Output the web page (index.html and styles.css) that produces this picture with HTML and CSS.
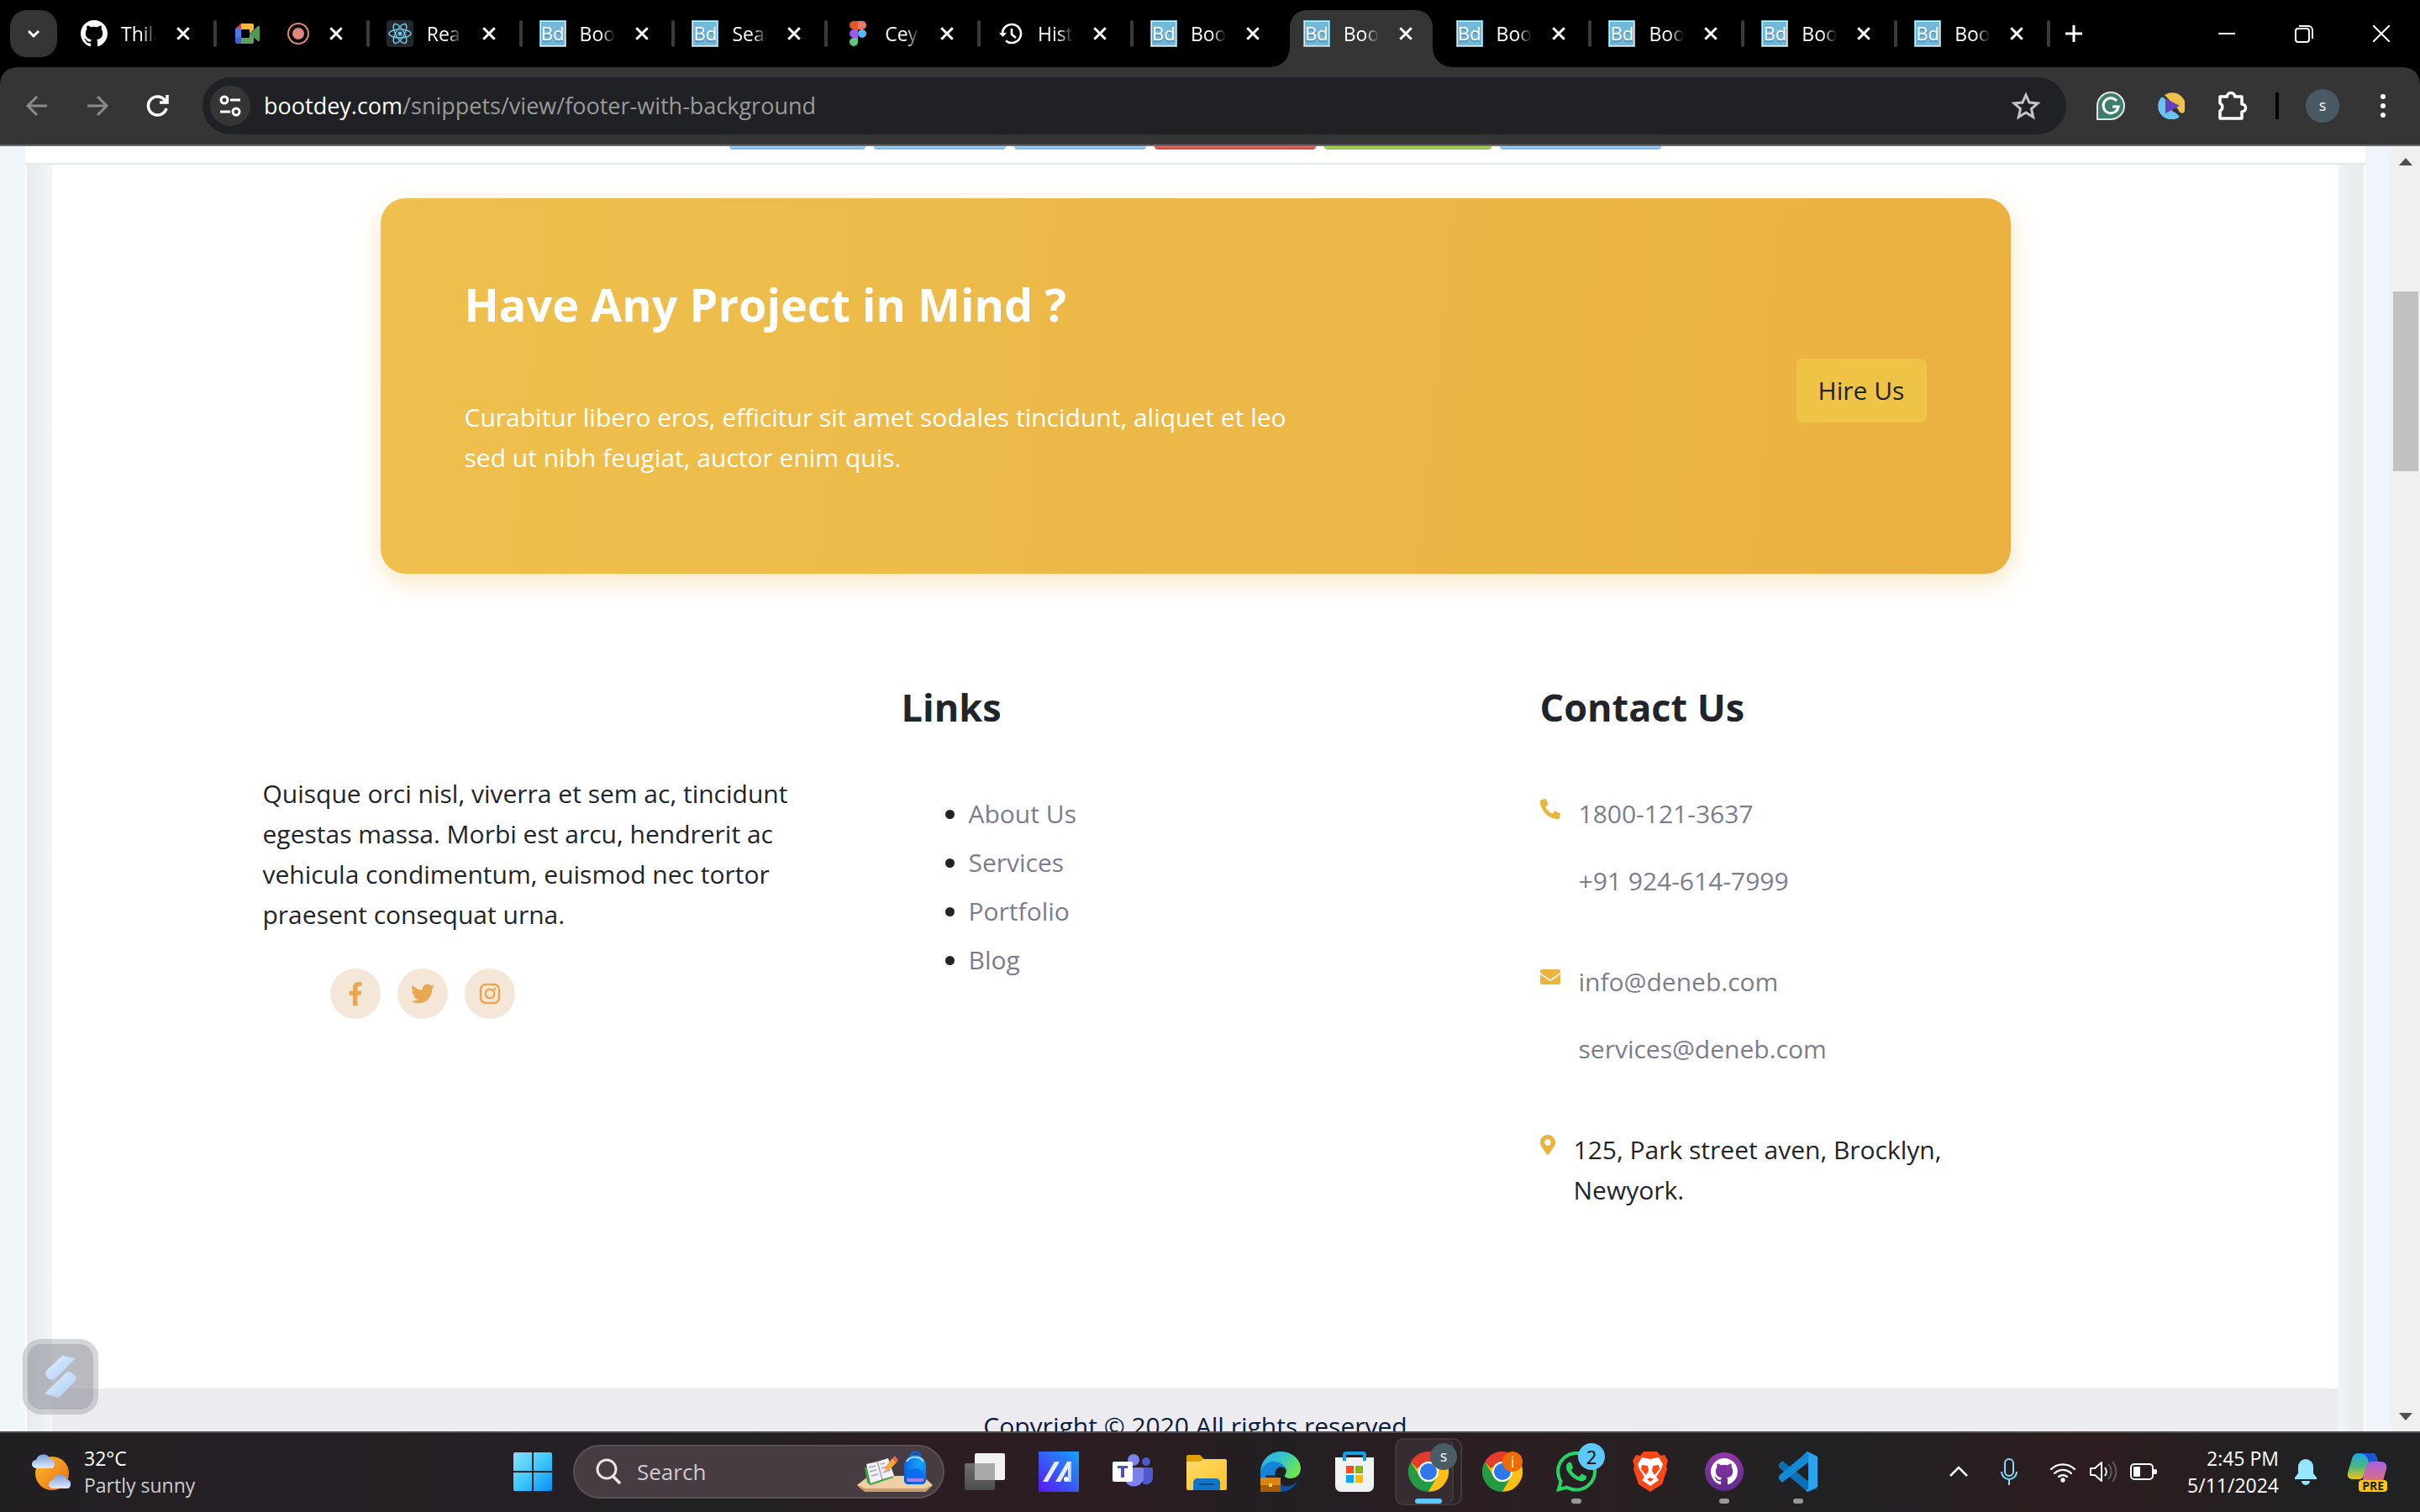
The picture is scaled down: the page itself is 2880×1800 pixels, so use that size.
FILE: index.html
```html
<!DOCTYPE html>
<html lang="en">
<head>
<meta charset="utf-8">
<title>Footer with background</title>
<link rel="stylesheet" href="styles.css">
</head>
<body>
<svg class="defs" aria-hidden="true">
  <symbol id="x" viewBox="0 0 16 16"><path d="M2 2l12 12M14 2L2 14" stroke="#fff" stroke-width="2.6" fill="none"/></symbol>
  <symbol id="cat" viewBox="0 0 16 16"><path d="M8 0C3.58 0 0 3.58 0 8c0 3.54 2.29 6.53 5.47 7.59.4.07.55-.17.55-.38 0-.19-.01-.82-.01-1.49-2.01.37-2.53-.49-2.69-.94-.09-.23-.48-.94-.82-1.13-.28-.15-.68-.52-.01-.53.63-.01 1.08.58 1.23.82.72 1.21 1.87.87 2.33.66.07-.52.28-.87.51-1.07-1.78-.2-3.64-.89-3.64-3.95 0-.87.31-1.59.82-2.15-.08-.2-.36-1.02.08-2.12 0 0 .67-.21 2.2.82.64-.18 1.32-.27 2-.27s1.36.09 2 .27c1.53-1.04 2.2-.82 2.2-.82.44 1.1.16 1.92.08 2.12.51.56.82 1.27.82 2.15 0 3.07-1.87 3.75-3.65 3.95.29.25.54.73.54 1.48 0 1.07-.01 1.93-.01 2.2 0 .21.15.46.55.38A8.01 8.01 0 0 0 16 8c0-4.42-3.58-8-8-8z"/></symbol>
  <symbol id="chrome" viewBox="0 0 48 48">
    <circle cx="24" cy="24" r="23" fill="#fbc116"/>
    <path d="M3.200 12A24 24 0 0 1 44.800 12H24A12 12 0 0 0 13.600 18L10 20z" fill="#e33b2e"/>
    <path d="M3.200 12A24 24 0 0 0 24 48L34.400 30A12 12 0 0 1 13.600 30z" fill="#249a45"/>
    <path d="M44.800 12A24 24 0 0 1 24 48L34.400 30A12 12 0 0 0 34.400 18L24 12z" fill="#fbc116"/>
    <circle cx="24" cy="24" r="12" fill="#fff"/><circle cx="24" cy="24" r="10" fill="#2f78ea"/>
  </symbol>
</svg>

<header class="tabstrip">
  <button class="tab-search" aria-label="Search tabs"><svg width="20" height="20" viewBox="0 0 20 20"><path d="M4 7l6 6 6-6" fill="none" stroke="#fff" stroke-width="3"/></svg></button>
  <nav class="tabs">
    <div class="tab"><svg class="fav" fill="#fff"><use href="#cat"/></svg><span class="title">Thila</span><button class="close" aria-label="Close"><svg><use href="#x"/></svg></button><i class="sep"></i></div>
    <div class="tab"><svg class="fav" viewBox="0 0 32 32"><path d="M2 10l7-6v6z" fill="#d8443c"/><path d="M9 4h13a2 2 0 0 1 2 2v5l-5 5v-5H9z" fill="#efb93d"/><path d="M2 10h7v11H2z" fill="#4b7be5"/><path d="M2 21h7v7H4a2 2 0 0 1-2-2z" fill="#3f63c8"/><path d="M9 21h10v-5l5 4v6a2 2 0 0 1-2 2H9z" fill="#5aa55a"/><path d="M19 16l10-9c1-.5 2 0 2 1v16c0 1-1 1.500-2 1z" fill="#4e9850"/></svg><span class="title title--rec"><svg width="26" height="26" viewBox="0 0 26 26"><circle cx="13" cy="13" r="12" fill="none" stroke="#de867e" stroke-width="2"/><circle cx="13" cy="13" r="7" fill="#de867e"/></svg></span><button class="close" aria-label="Close"><svg><use href="#x"/></svg></button><i class="sep"></i></div>
    <div class="tab"><svg class="fav" viewBox="0 0 32 32"><rect width="32" height="32" rx="4" fill="#23272b"/><g fill="none" stroke="#6fc3e4" stroke-width="1.500"><ellipse cx="16" cy="16" rx="13" ry="5"/><ellipse cx="16" cy="16" rx="13" ry="5" transform="rotate(60 16 16)"/><ellipse cx="16" cy="16" rx="13" ry="5" transform="rotate(120 16 16)"/></g><circle cx="16" cy="16" r="2.600" fill="#6fc3e4"/></svg><span class="title">Reac</span><button class="close" aria-label="Close"><svg><use href="#x"/></svg></button><i class="sep"></i></div>
    <div class="tab"><span class="fav bd">Bd</span><span class="title">Boo</span><button class="close" aria-label="Close"><svg><use href="#x"/></svg></button><i class="sep"></i></div>
    <div class="tab"><span class="fav bd">Bd</span><span class="title">Sear</span><button class="close" aria-label="Close"><svg><use href="#x"/></svg></button><i class="sep"></i></div>
    <div class="tab"><svg class="fav" viewBox="0 0 32 32"><path d="M16 1h-5a5 5 0 0 0 0 10h5z" fill="#e0562f"/><path d="M16 1h5a5 5 0 0 1 0 10h-5z" fill="#e67a68"/><path d="M16 11h-5a5 5 0 0 0 0 10h5z" fill="#9a5cf5"/><circle cx="21" cy="16" r="5" fill="#5cb8f5"/><path d="M16 21h-5a5 5 0 1 0 5 5z" fill="#62c783"/></svg><span class="title">Cey</span><button class="close" aria-label="Close"><svg><use href="#x"/></svg></button><i class="sep"></i></div>
    <div class="tab"><svg class="fav" viewBox="0 0 32 32" fill="none" stroke="#fff" stroke-width="2.600"><path d="M6 16a11 11 0 1 1 4 8.500"/><path d="M17 10v7l5 4"/><path d="M2 15h9l-4.500 5z" fill="#fff" stroke="none"/></svg><span class="title">Hist</span><button class="close" aria-label="Close"><svg><use href="#x"/></svg></button><i class="sep"></i></div>
    <div class="tab"><span class="fav bd">Bd</span><span class="title">Boo</span><button class="close" aria-label="Close"><svg><use href="#x"/></svg></button></div>
    <div class="tab tab--active"><span class="fav bd">Bd</span><span class="title">Boo</span><button class="close" aria-label="Close"><svg><use href="#x"/></svg></button></div>
    <div class="tab"><span class="fav bd">Bd</span><span class="title">Boo</span><button class="close" aria-label="Close"><svg><use href="#x"/></svg></button><i class="sep"></i></div>
    <div class="tab"><span class="fav bd">Bd</span><span class="title">Boo</span><button class="close" aria-label="Close"><svg><use href="#x"/></svg></button><i class="sep"></i></div>
    <div class="tab"><span class="fav bd">Bd</span><span class="title">Boo</span><button class="close" aria-label="Close"><svg><use href="#x"/></svg></button><i class="sep"></i></div>
    <div class="tab"><span class="fav bd">Bd</span><span class="title">Boo</span><button class="close" aria-label="Close"><svg><use href="#x"/></svg></button><i class="sep"></i></div>
  </nav>
  <button class="new-tab" aria-label="New tab"><svg width="22" height="22" viewBox="0 0 22 22"><path d="M11 1v20M1 11h20" stroke="#fff" stroke-width="3"/></svg></button>
  <div class="window-controls">
    <button aria-label="Minimize"><svg width="20" height="20" viewBox="0 0 20 20"><path d="M0 10h20" stroke="#fff" stroke-width="2"/></svg></button>
    <button aria-label="Restore"><svg width="22" height="22" viewBox="0 0 22 22" fill="none" stroke="#fff" stroke-width="2"><rect x="1" y="5" width="16" height="16" rx="3"/><path d="M5 2h11a5 5 0 0 1 5 5v10"/></svg></button>
    <button aria-label="Close window"><svg width="20" height="20" viewBox="0 0 20 20"><path d="M0 0l20 20M20 0L0 20" stroke="#fff" stroke-width="2"/></svg></button>
  </div>
</header>

<div class="toolbar-wrap">
<div class="toolbar">
  <button class="tool" aria-label="Back"><svg width="32" height="32" viewBox="0 0 32 32" fill="none" stroke="#8b8b8b" stroke-width="3"><path d="M28 16H6M16 5L5 16l11 11"/></svg></button>
  <button class="tool" aria-label="Forward"><svg width="32" height="32" viewBox="0 0 32 32" fill="none" stroke="#8b8b8b" stroke-width="3"><path d="M4 16h22M16 5l11 11-11 11"/></svg></button>
  <button class="tool" aria-label="Reload"><svg width="32" height="32" viewBox="0 0 32 32" fill="none" stroke="#fff" stroke-width="3.500"><path d="M26 19a11 11 0 1 1-2.500-10.500L27 12"/><path d="M27 3v9h-9"/></svg></button>
  <div class="omnibox">
    <button class="site-info" aria-label="Site information"><svg width="28" height="28" viewBox="0 0 28 28" fill="none" stroke="#fff" stroke-width="3"><circle cx="7" cy="7" r="4"/><path d="M14 7h12M2 21h12"/><circle cx="21" cy="21" r="4"/></svg></button>
    <span class="url"><span class="host">bootdey.com</span>/snippets/view/footer-with-background</span>
    <button class="tool" aria-label="Bookmark"><svg width="36" height="36" viewBox="0 0 36 36"><path d="M18 5l4 9 10 1-7.500 6.500 2.200 9.800L18 26l-8.700 5.300 2.200-9.800L4 15l10-1z" fill="none" stroke="#c4c4c4" stroke-width="3"/></svg></button>
  </div>
  <button class="tool" aria-label="Grammarly"><svg width="34" height="34" viewBox="0 0 34 34"><path d="M1 33V17a16 16 0 1 1 16 16z" fill="#3d7d6b" stroke="#dfe9e6" stroke-width="2"/><path d="M24 11a9 9 0 1 0 2 7h-7" fill="none" stroke="#fff" stroke-width="3"/></svg></button>
  <button class="tool" aria-label="Player"><svg width="32" height="32" viewBox="0 0 32 32"><path d="M8 3a16 16 0 0 1 23 21c-3 2-6-1-7-4z" fill="#efc04a"/><path d="M4 6a16 16 0 0 0 22 23c-3-3-4-5-8-6L7 6z" fill="#6cc4ee"/><path d="M9 7l17 9-17 9z" fill="#6540bf"/></svg></button>
  <button class="tool" aria-label="Extensions"><svg width="38" height="38" viewBox="0 0 38 38"><path d="M5 8h8.500a4.500 4.500 0 0 1 9 0H31v9a4.500 4.500 0 0 1 0 9v8H5v-9a5 5 0 0 0 0-9z" fill="none" stroke="#fff" stroke-width="3.500" stroke-linejoin="round"/></svg></button>
  <i class="tool-sep"></i>
  <button class="tool" aria-label="Profile"><span class="avatar">s</span></button>
  <button class="tool" aria-label="Menu"><svg width="8" height="30" viewBox="0 0 8 30" fill="#fff"><circle cx="4" cy="4" r="3"/><circle cx="4" cy="15" r="3"/><circle cx="4" cy="26" r="3"/></svg></button>
</div>
</div>

<div class="viewport">
  <main class="page">
    <div class="panel">
      <div class="chips"><i class="chip chip--lg"></i><i class="chip"></i><i class="chip"></i><i class="chip chip--red"></i><i class="chip chip--green"></i><i class="chip chip--xl"></i></div>
      <div class="frame">
        <div class="sheet">
          <section class="cta">
            <div class="cta-text">
              <h2>Have Any Project in Mind ?</h2>
              <p>Curabitur libero eros, efficitur sit amet sodales tincidunt, aliquet et leo sed ut nibh feugiat, auctor enim quis.</p>
            </div>
            <button class="hire">Hire Us</button>
          </section>
          <footer>
            <div class="columns">
              <section class="about">
                <p>Quisque orci nisl, viverra et sem ac, tincidunt egestas massa. Morbi est arcu, hendrerit ac vehicula condimentum, euismod nec tortor praesent consequat urna.</p>
                <div class="social">
                  <a href="#" aria-label="Facebook"><svg width="18" height="28" viewBox="0 0 320 512"><path d="M279.140 288l14.220-92.660h-88.910v-60.130c0-25.350 12.420-50.060 52.240-50.060h40.420V6.260S260.430 0 225.360 0c-73.220 0-121.080 44.380-121.080 124.720v70.620H22.890V288h81.390v224h100.170V288z"/></svg></a>
                  <a href="#" aria-label="Twitter"><svg width="28" height="28" viewBox="0 0 512 512"><path d="M459.370 151.716c.325 4.548.325 9.097.325 13.645 0 138.720-105.583 298.558-298.558 298.558-59.452 0-114.680-17.219-161.137-47.106 8.447.974 16.568 1.299 25.340 1.299 49.055 0 94.213-16.568 130.274-44.832-46.132-.975-84.792-31.188-98.112-72.772 6.498.974 12.995 1.624 19.818 1.624 9.421 0 18.843-1.300 27.614-3.573-48.081-9.747-84.143-51.980-84.143-102.985v-1.299c13.969 7.797 30.214 12.670 47.431 13.319-28.264-18.843-46.781-51.005-46.781-87.391 0-19.492 5.197-37.360 14.294-52.954 51.655 63.675 129.300 105.258 216.365 109.807-1.624-7.797-2.599-15.918-2.599-24.040 0-57.828 46.782-104.934 104.934-104.934 30.213 0 57.502 12.670 76.670 33.137 23.715-4.548 46.456-13.320 66.599-25.340-7.798 24.366-24.366 44.833-46.132 57.827 21.117-2.273 41.584-8.122 60.426-16.243-14.292 20.791-32.161 39.308-52.628 54.253z"/></svg></a>
                  <a href="#" aria-label="Instagram"><svg width="26" height="26" viewBox="0 0 26 26"><rect x="2" y="2" width="22" height="22" rx="6" fill="none" stroke="#e9a752" stroke-width="2.500"/><circle cx="13" cy="13" r="5.300" fill="none" stroke="#e9a752" stroke-width="2.500"/><circle cx="19" cy="7" r="1.500"/></svg></a>
                </div>
              </section>
              <section>
                <h3>Links</h3>
                <ul class="links"><li><a href="#">About Us</a></li><li><a href="#">Services</a></li><li><a href="#">Portfolio</a></li><li><a href="#">Blog</a></li></ul>
              </section>
              <section>
                <h3>Contact Us</h3>
                <div class="contact">
                  <div class="entry"><svg class="mark" viewBox="0 0 512 512"><path transform="matrix(-1 0 0 1 512 0)" d="M493.400 24.600l-104-24c-11.300-2.600-22.900 3.300-27.500 13.900l-48 112c-4.200 9.800-1.400 21.300 6.900 28l60.600 49.600c-36 76.700-98.900 140.500-177.200 177.200l-49.600-60.600c-6.800-8.300-18.200-11.100-28-6.900l-112 48C3.900 366.500-2 378.100.6 389.400l24 104C27.100 504.200 36.700 512 48 512c256.100 0 464-207.500 464-464 0-11.200-7.700-20.900-18.600-23.400z"/></svg><div><a href="#">1800-121-3637</a><a href="#">+91 924-614-7999</a></div></div>
                  <div class="entry"><svg class="mark" viewBox="0 0 512 512"><path d="M502.300 190.800c3.900-3.100 9.700-.2 9.700 4.700V400c0 26.500-21.500 48-48 48H48c-26.500 0-48-21.500-48-48V195.600c0-5 5.700-7.800 9.700-4.700 22.400 17.400 52.100 39.500 154.100 113.600 21.100 15.400 56.700 47.800 92.200 47.600 35.700.3 72-32.800 92.300-47.600 102-74.100 131.600-96.300 154-113.700zM256 320c23.200.4 56.600-29.200 73.400-41.400 132.700-96.300 142.800-104.700 173.400-128.700 5.800-4.500 9.200-11.500 9.200-18.900v-19c0-26.500-21.500-48-48-48H48c-26.500 0-48 21.500-48 48v19c0 7.400 3.400 14.300 9.200 18.900 30.600 23.900 40.700 32.400 173.400 128.700 16.800 12.200 50.200 41.800 73.400 41.400z"/></svg><div><a href="#">info@deneb.com</a><a href="#">services@deneb.com</a></div></div>
                  <div class="entry"><svg class="mark mark--pin" viewBox="0 0 384 512"><path d="M172.268 501.670C26.970 291.031 0 269.413 0 192 0 85.961 85.961 0 192 0s192 85.961 192 192c0 77.413-26.970 99.031-172.268 309.670-9.535 13.774-29.930 13.773-39.464 0zM192 272c44.183 0 80-35.817 80-80s-35.817-80-80-80-80 35.817-80 80 35.817 80 80 80z"/></svg><p>125, Park street aven, Brocklyn, Newyork.</p></div>
                </div>
              </section>
            </div>
            <p class="copyright">Copyright © 2020 All rights reserved</p>
          </footer>
        </div>
      </div>
    </div>
  </main>
  <div class="scrollbar"><i class="arrow-up"></i><i class="thumb"></i><i class="arrow-down"></i></div>
  <button class="helper" aria-label="Assistant"><svg width="40" height="52" viewBox="0 0 40 52"><defs><linearGradient id="hg" x1="0" y1="0" x2="1" y2="1"><stop offset="0" stop-color="#e6f1ff"/><stop offset="1" stop-color="#a6cbf4"/></linearGradient></defs><path d="M22 1l16 3L12 30C3 29 0 23 4 18z" fill="url(#hg)"/><path d="M28 20c9 1 13 7 9 12L18 51 1 46z" fill="url(#hg)"/></svg></button>
</div>

<div class="taskbar">
  <div class="weather">
    <svg width="48" height="44" viewBox="0 0 48 44"><defs><linearGradient id="sun" x1="0" y1="0" x2="1" y2="1"><stop offset="0" stop-color="#f6c02c"/><stop offset="1" stop-color="#ee6a12"/></linearGradient><linearGradient id="cl" x1="0" y1="0" x2="0" y2="1"><stop offset="0" stop-color="#7fa0dc"/><stop offset="1" stop-color="#dfeafb"/></linearGradient></defs><circle cx="24" cy="24" r="20" fill="url(#sun)"/><path d="M5 18a5 5 0 0 1 0-10 9 9 0 0 1 17-1 6 6 0 0 1 2 11z" fill="url(#cl)"/><path d="M25 42a5 5 0 0 1 0-10 9 9 0 0 1 17-1 6 6 0 0 1 1 11z" fill="url(#cl)"/></svg>
    <div><div>32°C</div><div class="sky">Partly sunny</div></div>
  </div>
  <div class="apps">
    <button class="app" aria-label="Start"><svg width="46" height="46" viewBox="0 0 46 46"><defs><linearGradient id="win" x1="0" y1="0" x2="1" y2="1"><stop offset="0" stop-color="#8be0fb"/><stop offset=".5" stop-color="#3fc8fb"/><stop offset="1" stop-color="#0a8df5"/></linearGradient></defs><path d="M2 0h20v22H0V2a2 2 0 0 1 2-2zM24 0h20a2 2 0 0 1 2 2v20H24zM0 24h22v22H2a2 2 0 0 1-2-2zM24 24h22v20a2 2 0 0 1-2 2H24z" fill="url(#win)"/></svg></button>
    <label class="search"><svg width="32" height="32" viewBox="0 0 32 32" fill="none" stroke="#e8e4e8" stroke-width="3"><circle cx="14" cy="13" r="11"/><path d="M21 21l9 9" stroke-width="3.500"/></svg><input type="text" placeholder="Search" aria-label="Search">
      <svg width="90" height="50" viewBox="0 0 90 50"><defs><radialGradient id="bp" cx=".7" cy=".3" r=".8"><stop offset="0" stop-color="#14a6ff"/><stop offset="1" stop-color="#0a5bd8"/></radialGradient></defs><path d="M0 41l14-11h64l12 11-9 8H10z" fill="#efd0a2"/><path d="M0 41l10 4h71l9-4-4 4c-3 3-5 4-9 4H14c-5 0-8-2-11-5z" fill="#c69c6c"/><path d="M9 20l3 18 4 3 27-9 1-4L37 14z" fill="#3f9f4c"/><path d="M11 16l13-3 13-4 7 21-14 4-14 5z" fill="#f3f0f6"/><path d="M24 13l6 21M14 20l8-2M15 25l8-2M17 30l8-2M28 16l5-1M29 21l9-3M31 26l9-3" stroke="#aaa3b5" stroke-width="1.500" fill="none"/><path d="M34 19l8-10 5 5-9 9-5 1z" fill="#f8a834"/><path d="M42 9l3-3 4 5-2 3z" fill="#ef5f56"/><path d="M64 7a5 5 0 0 1 11 0" fill="none" stroke="#0c63cf" stroke-width="3"/><path d="M56 36V19a13 14 0 0 1 26 0v17a5 5 0 0 1-5 4H61a5 5 0 0 1-5-4z" fill="url(#bp)"/><path d="M59 13a11 9 0 0 1 20 0" fill="none" stroke="#a6d7fb" stroke-width="2"/><path d="M59 34v-4a10 9 0 0 1 20 0v4z" fill="#0a6ef0"/><path d="M59 33h20v3a2 2 0 0 1-2 1H61a2 2 0 0 1-2-1z" fill="#a77bf2"/></svg></label>
    <button class="app" aria-label="Task view"><svg width="48" height="48" viewBox="0 0 48 48"><defs><linearGradient id="tv" x1="0" y1="0" x2="0" y2="1"><stop offset="0" stop-color="#6e6e6e"/><stop offset="1" stop-color="#4c4c4c"/></linearGradient></defs><rect y="14" width="36" height="32" rx="2" fill="url(#tv)"/><rect x="12" y="2" width="36" height="32" rx="2" fill="#f1f1f1"/><path d="M12 14h24v20H14a2 2 0 0 1-2-2z" fill="#a9a9a9"/></svg></button>
    <button class="app" aria-label="Armoury"><svg width="48" height="48" viewBox="0 0 48 48"><defs><linearGradient id="arm" x1="0" y1="1" x2="1" y2="0"><stop offset="0" stop-color="#5a16ee"/><stop offset="1" stop-color="#12a4ff"/></linearGradient></defs><path d="M0 0h48v48H0z" fill="url(#arm)"/><path d="M5 36l14-24h6L11 36zM20 36l14-24h5v18h-4V20L26 36z" fill="#eceaff"/><path d="M37 14h2v22h-4v-6h2z" fill="#a9cdff"/><circle cx="33" cy="33" r="3" fill="#fff"/></svg></button>
    <button class="app" aria-label="Teams"><svg width="48" height="48" viewBox="0 0 48 48"><circle cx="40" cy="12" r="5" fill="#5059c9"/><path d="M34 19h12a2 2 0 0 1 2 2v10a8 8 0 0 1-12 7z" fill="#5059c9"/><circle cx="25" cy="10" r="7" fill="#7b83eb"/><path d="M14 19h21a2 2 0 0 1 2 2v12a12 12 0 0 1-23 0z" fill="#7b83eb"/><rect y="12" width="24" height="24" rx="2" fill="#fff"/><path d="M6 17h12v3h-4v11h-4V20H6z" fill="#4b53bc"/></svg></button>
    <button class="app" aria-label="Files"><svg width="48" height="48" viewBox="0 0 48 48"><defs><linearGradient id="fo" x1="0" y1="0" x2="1" y2="1"><stop offset="0" stop-color="#ffdb6e"/><stop offset="1" stop-color="#fcc223"/></linearGradient></defs><path d="M0 6a2 2 0 0 1 2-2h14l5 5v6H0z" fill="#e0a008"/><path d="M0 12h16l5-3h25a2 2 0 0 1 2 2v33a2 2 0 0 1-2 2H2a2 2 0 0 1-2-2z" fill="url(#fo)"/><path d="M8 46V37a5 5 0 0 1 5-5h22a5 5 0 0 1 5 5v9z" fill="#1175c5"/><path d="M15 39h18" stroke="#0a4a87" stroke-width="2"/></svg></button>
    <button class="app" aria-label="Edge"><svg width="48" height="48" viewBox="0 0 48 48"><defs><linearGradient id="ed" x1="0" y1="0" x2="1" y2=".5"><stop offset="0" stop-color="#2fa9ee"/><stop offset=".5" stop-color="#32c3d2"/><stop offset="1" stop-color="#6be54f"/></linearGradient></defs><path d="M0 24C1 10 11 0 24 0s24 9 24 20c0 8-6 12-12 12-5 0-8-2-7-4 3-4 2-9-2-11C21 11 8 11 0 24z" fill="url(#ed)"/><path d="M0 24C3 15 11 11 18 12c6 1 11 4 11 9-2-3-6-4-9-1-5 5-3 14 2 20l-6 7C6 44-1 35 0 24z" fill="#1384d8"/><path d="M19 24c-3 8 2 17 12 17 5 0 9-2 13-5-4 8-12 12-20 12-6-2-11-14-5-24z" fill="#124f9c"/><path d="M8 32v-2h8v2" fill="none" stroke="#3a2411" stroke-width="3"/><path d="M0 31h24v17H0z" fill="#a85c08"/><path d="M0 31h24v9H0z" fill="#dc860e"/><path d="M10 38h4v4h-4z" fill="#ffd34e"/></svg></button>
    <button class="app" aria-label="Store"><svg width="48" height="48" viewBox="0 0 48 48"><path d="M1 7h46v34a7 7 0 0 1-7 7H8a7 7 0 0 1-7-7z" fill="#f1f2f3"/><path d="M12 11V4a2 2 0 0 1 2-2h20a2 2 0 0 1 2 2v7" fill="none" stroke="#14a1e6" stroke-width="4"/><path d="M14 17h9v9h-9z" fill="#f25022"/><path d="M25 17h9v9h-9z" fill="#7fba00"/><path d="M14 28h9v9h-9z" fill="#00a4ef"/><path d="M25 28h9v9h-9z" fill="#ffb900"/></svg></button>
    <button class="app app--active" aria-label="Chrome"><svg width="48" height="48"><use href="#chrome"/></svg><span class="badge badge--s">s</span><i class="run run--on"></i></button>
    <button class="app" aria-label="Chrome profile"><svg width="48" height="48"><use href="#chrome"/></svg><span class="badge badge--i">i</span></button>
    <button class="app" aria-label="WhatsApp"><svg width="48" height="48" viewBox="0 32 448 448"><path fill="#25d366" d="M380.900 97.100C339 55.100 283.200 32 223.900 32c-122.400 0-222 99.600-222 222 0 39.100 10.200 77.300 29.600 111L0 480l117.700-30.900c32.400 17.700 68.900 27 106.100 27h.1c122.300 0 224.100-99.600 224.100-222 0-59.300-25.200-115-67.100-157zm-157 341.600c-33.200 0-65.700-8.900-94-25.700l-6.700-4-69.800 18.300L72 359.200l-4.400-7c-18.500-29.400-28.200-63.300-28.200-98.200 0-101.700 82.800-184.500 184.600-184.500 49.300 0 95.600 19.200 130.400 54.100 34.800 34.900 56.200 81.200 56.100 130.500 0 101.800-84.900 184.600-186.600 184.600zm101.200-138.200c-5.500-2.800-32.800-16.200-37.900-18-5.100-1.900-8.800-2.800-12.500 2.800-3.700 5.600-14.300 18-17.600 21.800-3.200 3.700-6.500 4.200-12 1.400-32.600-16.300-54-29.100-75.500-66-5.700-9.800 5.700-9.100 16.300-30.300 1.800-3.700.9-6.900-.5-9.700-1.400-2.800-12.500-30.100-17.100-41.200-4.500-10.800-9.100-9.300-12.500-9.500-3.200-.2-6.900-.2-10.600-.2-3.700 0-9.700 1.400-14.800 6.900-5.100 5.600-19.400 19-19.400 46.300 0 27.300 19.900 53.700 22.600 57.400 2.800 3.700 39.100 59.700 94.800 83.800 35.200 15.200 49 16.500 66.600 13.900 10.700-1.600 32.800-13.400 37.400-26.400 4.600-13 4.600-24.100 3.200-26.400-1.300-2.500-5-3.900-10.500-6.600z"/></svg><span class="badge badge--2">2</span><i class="run"></i></button>
    <button class="app" aria-label="Brave"><svg width="42" height="48" viewBox="0 0 42 48"><path d="M13 0h16l4 5 5-1 4 7-2 6 1 4-6 18-14 9L7 39 1 21l1-4-2-6 4-7 5 1z" fill="#fb4617"/><path d="M21 9l10-2 5 8-2 6-6 9 3 4-10 7-10-7 3-4-6-9-2-6 5-8z" fill="#fff"/><path d="M11 16l7 1 1 6-3 5-6-7zM31 16l-7 1-1 6 3 5 6-7zM17 33l4-2 4 2-4 3z" fill="#fb4617"/></svg></button>
    <button class="app" aria-label="GitHub"><svg width="46" height="46" viewBox="0 0 46 46"><defs><linearGradient id="gh" x1="0" y1="0" x2="0" y2="1"><stop offset="0" stop-color="#9236a8"/><stop offset="1" stop-color="#5d2d8c"/></linearGradient></defs><circle cx="23" cy="23" r="23" fill="url(#gh)"/><svg x="7" y="7" width="32" height="32" fill="#fff"><use href="#cat"/></svg></svg><i class="run"></i></button>
    <button class="app" aria-label="Code"><svg width="48" height="48" viewBox="0 0 48 48"><path d="M1 15l4-4L47 44l-12 4L1 19z" fill="#0c70b6"/><path d="M1 33l4 4L37 12 35 0 1 29z" fill="#1489d6"/><path d="M35 0l12 6v36l-12 6-2-2c2 0 3-1 3-3V5c0-2-1-3-3-3z" fill="#2ba3ee"/></svg><i class="run"></i></button>
  </div>
  <div class="tray">
    <svg width="24" height="24" viewBox="0 0 24 24" fill="none" stroke="#fff" stroke-width="2.500"><path d="M2 17L12 7l10 10"/></svg>
    <svg width="24" height="34" viewBox="0 0 24 34" fill="none" stroke="#86dcf8" stroke-width="2"><rect x="7" y="2" width="10" height="20" rx="5"/><path d="M3 17a9 9 0 0 0 18 0M12 26v7"/></svg>
    <div class="quick">
      <svg width="32" height="26" viewBox="0 0 32 26" fill="none" stroke="#fff" stroke-width="2.300" stroke-linecap="round"><path d="M2 10a20 20 0 0 1 28 0M6 15a14 14 0 0 1 20 0M11 19a8 8 0 0 1 10 0"/><circle cx="16" cy="23" r="1.500" fill="#fff"/></svg>
      <svg width="32" height="28" viewBox="0 0 32 28" fill="none" stroke="#fff" stroke-width="2"><path d="M1 10h5l8-7v22l-8-7H1z" stroke-linejoin="round"/><path d="M18 9a8 8 0 0 1 0 10"/><path d="M22 5a13 13 0 0 1 0 18M27 2a19 19 0 0 1 0 24" stroke="#5d5a5c"/></svg>
      <svg width="32" height="22" viewBox="0 0 32 22"><rect x="1" y="2" width="26" height="18" rx="4" fill="none" stroke="#fff" stroke-width="2"/><rect x="4" y="5" width="8" height="12" rx="1" fill="#fff"/><path d="M28 8h2a2 2 0 0 1 2 2v2a2 2 0 0 1-2 2h-2z" fill="#fff"/></svg>
    </div>
    <div class="clock"><div class="time"><div>2:45 PM</div><div>5/11/2024</div></div><svg width="26" height="32" viewBox="0 0 26 32" fill="#96e6ff"><path d="M13 1a9 9 0 0 0-9 9v8l-4 5v2h26v-2l-4-5v-8a9 9 0 0 0-9-9zM8 27h10a5 5 0 0 1-10 0z"/></svg></div>
    <div class="copilot"><svg width="48" height="44" viewBox="0 0 48 44"><defs><linearGradient id="c1" x1="0" y1="0" x2="0" y2="1"><stop offset="0" stop-color="#1ea7e8"/><stop offset=".5" stop-color="#49b97c"/><stop offset="1" stop-color="#f0c21a"/></linearGradient><linearGradient id="c2" x1="0" y1="0" x2="0" y2="1"><stop offset="0" stop-color="#a263e6"/><stop offset="1" stop-color="#f2705f"/></linearGradient></defs><path d="M22 10h18c6 0 8 4 7 9l-4 14c-1 4-4 6-8 6H18z" fill="url(#c2)"/><path d="M14 0h16c4 0 5 3 7 10h-8c-4 0-5 2-6 6l-3 10c-1 4-3 5-6 5H7c-5 0-7-3-6-8L6 7c1-4 3-7 8-7z" fill="url(#c1)"/><path d="M14 0h16c4 0 5 3 7 10h-8l-3 1c-1-6-4-11-12-11z" fill="#1b55d0"/></svg><span class="pre">PRE</span></div>
  </div>
</div>
</body>
</html>
```
FILE: styles.css
```css
* { box-sizing: border-box; }
body {
  margin: 0;
  height: 100vh;
  display: flex;
  flex-direction: column;
  overflow: hidden;
  background: #000;
  font-family: "Segoe UI", "Open Sans", "Noto Sans", sans-serif;
  font-size: 30px;
  line-height: 48px;
  color: #212529;
}
h2, h3, p, ul { margin: 0; padding: 0; }
a { color: #7b7d8e; text-decoration: none; }
svg { display: block; flex: none; }
button { border: 0; padding: 0; background: none; font: inherit; color: inherit; display: flex; align-items: center; justify-content: center; }
.defs { position: absolute; width: 0; height: 0; }

/* Tab strip */
.tabstrip { display: flex; align-items: center; height: 80px; flex: none; padding-left: 12px; color: #fff; font-size: 23px; line-height: 34px; }
.tab-search { width: 56px; height: 56px; border-radius: 20px; background: #353535; margin-right: 6px; }
.tabs { display: flex; flex: 0 1 2364px; height: 80px; }
.tab { flex: 1 1 0; min-width: 0; display: flex; align-items: center; gap: 16px; padding-left: 22px; position: relative; isolation: isolate; }
.fav { width: 32px; height: 32px; flex: none; }
.bd { background: #71b8d9; color: #fff; font-size: 22px; line-height: 30px; text-align: center; box-shadow: inset 0 0 0 1px #71b8d9, inset 0 0 0 2px #d9eef7; text-shadow: 0 2px 2px #4d8aa8; }
.title { width: 42px; flex: none; overflow: hidden; white-space: nowrap; -webkit-mask-image: linear-gradient(to right, #000 60%, transparent); mask-image: linear-gradient(to right, #000 60%, transparent); }
.title--rec { display: flex; justify-content: flex-end; -webkit-mask-image: none; mask-image: none; }
.close { width: 32px; height: 32px; flex: none; }
.close svg { width: 18px; height: 18px; }
.sep { width: 4px; height: 32px; border-radius: 2px; background: #3a3a3a; margin: 0 -2px 0 auto; flex: none; }
.tab--active::before { content: ""; position: absolute; inset: 12px 6px 0; border-radius: 20px 20px 0 0; background: #353535; z-index: -1; }
.tab--active::after { content: ""; position: absolute; inset: auto -16px 0; height: 22px; z-index: -1; background: radial-gradient(circle at 0 0, transparent 21px, #353535 22px) left / 22px 22px no-repeat, radial-gradient(circle at 100% 0, transparent 21px, #353535 22px) right / 22px 22px no-repeat; }
.new-tab { width: 60px; height: 60px; }
.window-controls { display: flex; margin-left: auto; }
.window-controls button { width: 92px; height: 80px; }

/* Toolbar */
.toolbar-wrap { flex: none; background: #000; }
.toolbar { display: flex; align-items: center; gap: 24px; height: 94px; padding: 0 20px; background: #353535; border-bottom: 2px solid #656565; border-radius: 20px 20px 0 0; }
.tool { width: 48px; height: 48px; flex: none; }
.omnibox { flex: 1; display: flex; align-items: center; height: 68px; margin: 0 5px; padding: 0 24px 0 9px; border-radius: 34px; background: #202124; }
.site-info { width: 48px; height: 48px; border-radius: 24px; background: #353535; flex: none; }
.url { flex: 1; margin-left: 16px; font-size: 27px; color: #9a9a9a; white-space: nowrap; }
.host { color: #fff; }
.tool-sep { width: 12px; height: 32px; background: #000; border: solid #353535; border-width: 0 4px; flex: none; }
.avatar { width: 40px; height: 40px; border-radius: 20px; background: #4a5a64; color: #fff; font-size: 18px; line-height: 38px; text-align: center; }

/* Web page area */
.viewport { flex: 1; min-height: 0; display: flex; overflow: hidden; position: relative; background: #f0f5f9; }
.page { flex: 1; min-width: 0; padding: 0 30px; }
.panel { background: #fff; }
.chips { display: flex; justify-content: center; gap: 10px; height: 22px; border-bottom: 2px solid #e2e9e9; }
.chip { width: 157px; height: 4px; border-radius: 0 0 6px 6px; background: #9fcef0; border-bottom: 2px solid #82b9e6; }
.chip--lg { width: 162px; }
.chip--xl { width: 192px; }
.chip--red { width: 192px; background: #de6560; border-color: #cf4c48; }
.chip--green { width: 199px; background: #a6d65c; border-color: #90c449; }
.frame { margin: 0 2px; padding: 0 30px; background: linear-gradient(to right, #e8e9ea, #f0f5f8 30px, #f0f5f8 calc(100% - 30px), #e8e9ea); }
.sheet { background: #fff; padding-top: 40px; }

.cta { display: flex; align-items: center; justify-content: space-between; max-width: 1940px; margin: 0 auto; padding: 93px 100px 82px; border-radius: 30px; background: linear-gradient(95deg, #efc04d, #ecb948 45%, #eab140); box-shadow: 0 10px 30px rgba(234, 177, 64, .32); color: #fff; }
.cta-text { max-width: 1000px; padding-bottom: 32px; }
.cta h2 { font-size: 54px; line-height: 66px; margin-bottom: 78px; }
.hire { width: 155px; height: 76px; border-radius: 8px; background: #efc345; color: #212529; }

.columns { display: grid; grid-template-columns: repeat(3, 1fr); max-width: 2280px; margin: 0 auto; padding: 128px 0 212px; }
.columns > section { padding-left: 30px; }
h3 { font-size: 45px; line-height: 62px; margin-bottom: 72px; }
.about { padding-top: 110px; }
.about p { max-width: 650px; }
.social { display: flex; gap: 20px; padding: 40px 0 0 80px; }
.social a { width: 60px; height: 60px; border-radius: 30px; background: #f5e7d7; display: flex; align-items: center; justify-content: center; }
.social svg { fill: #e9a752; }
.links { padding-left: 80px; }
.links li { margin-bottom: 10px; }
.contact { display: flex; flex-direction: column; gap: 40px; }
.entry { display: flex; align-items: flex-start; gap: 22px; }
.entry a { display: block; margin-bottom: 32px; }
.entry p { max-width: 480px; }
.mark { width: 24px; height: 24px; margin-top: 6px; fill: #ebb43f; }
.mark--pin { width: 18px; }
.copyright { padding: 21px 0; background: #ecebf0; color: #0b1b3e; text-align: center; }

.scrollbar { width: 35px; background: #f0f0f0; flex: none; display: flex; flex-direction: column; align-items: center; padding: 14px 0 13px; }
.arrow-up, .arrow-down { border: 8px solid transparent; border-top-width: 0; border-bottom: 9px solid #505050; }
.arrow-down { transform: rotate(180deg); margin-top: auto; }
.thumb { width: 30px; height: 214px; margin-top: 150px; background: #c1c1c1; }
.helper { position: absolute; left: 27px; bottom: 20px; width: 90px; height: 90px; border: 6px solid rgba(150, 152, 160, .4); border-radius: 22px; background: rgba(140, 143, 153, .62); background-clip: padding-box; }

/* Taskbar */
.taskbar { flex: none; display: flex; align-items: center; height: 96px; padding-bottom: 2px; border-top: 2px solid #4a484a; background: linear-gradient(to right, #221f23, #261f25 20%, #202123 30%, #2c1d23 38%, #2b1d21 46%, #221f22 53%, #2b1e22 60%, #272022 68%, #202123 76%, #2d1c20 86%, #202122 96%); color: #fff; font-size: 23px; line-height: 32px; }
.weather { display: flex; align-items: center; gap: 14px; flex: 0 0 594px; padding-left: 38px; }
.sky { color: #cfcdcf; }
.apps { display: flex; gap: 8px; align-items: center; }
.app { width: 80px; height: 80px; position: relative; border-radius: 10px; }
.app--active { background: #372c31; border: 2px solid #43383d; box-shadow: inset -8px 0 0 #2c2327, inset -10px 0 0 #43383d; }
.search { display: flex; align-items: center; gap: 18px; width: 442px; height: 64px; padding: 0 12px 0 24px; border-radius: 32px; border: 2px solid #5b5056; background: #473c42; }
.search input { flex: 1; min-width: 0; border: 0; padding: 0; background: none; outline: 0; font: inherit; font-size: 26px; color: #fff; }
.search input::placeholder { color: #cfcacd; opacity: 1; }
.badge { position: absolute; border-radius: 50%; text-align: center; }
.badge--s { right: 4px; top: 4px; width: 32px; height: 32px; background: #4a5c66; font-size: 18px; line-height: 30px; }
.badge--i { right: 16px; top: 16px; width: 24px; height: 24px; background: #ef6c05; font-size: 18px; line-height: 24px; }
.badge--2 { right: 6px; top: 6px; width: 32px; height: 32px; background: #5cc8fb; color: #000; font-size: 22px; line-height: 32px; }
.run { position: absolute; bottom: 2px; left: 34px; width: 12px; height: 6px; border-radius: 3px; background: #989698; }
.run--on { bottom: 0; left: 22px; width: 32px; background: #5cc8fb; }
.tray { display: flex; align-items: center; gap: 36px; margin-left: auto; padding-right: 39px; }
.quick { display: flex; align-items: center; gap: 16px; }
.clock { display: flex; align-items: center; gap: 19px; text-align: right; }
.copilot { position: relative; }
.pre { position: absolute; right: 0; bottom: -2px; padding: 0 4px; border-radius: 4px; background: #fbc70e; color: #1f1f1f; font-size: 14px; font-weight: 700; line-height: 14px; }
```
